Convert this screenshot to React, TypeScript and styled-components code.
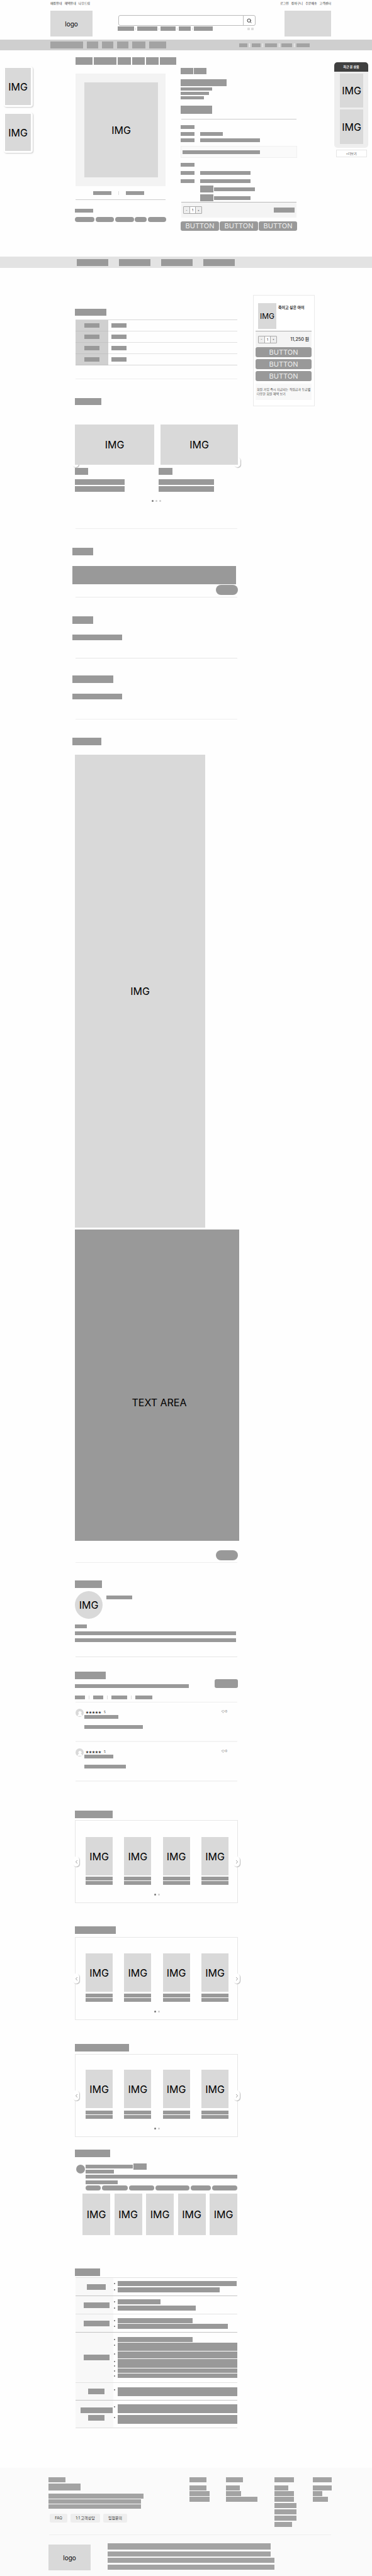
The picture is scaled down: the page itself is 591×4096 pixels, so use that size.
import React from "react";
import styled, { createGlobalStyle } from "styled-components";
import { ChevronLeft, ChevronRight, Heart, Search, UserRound } from "lucide-react";

const ink = "#999";
const soft = "#d9d9d9";

const GlobalStyle = createGlobalStyle`
  *, *::before, *::after { box-sizing: border-box; }
  body {
    margin: 0;
    background: #fefefe;
    color: #000;
    font-family: Inter, "Noto Sans CJK KR", sans-serif;
    font-size: 16px;
    line-height: 1;
  }
  a { color: inherit; text-decoration: none; }
  button, input { font: inherit; color: inherit; margin: 0; padding: 0; border: 0; border-radius: 0; }
  button { cursor: pointer; }
  ul { list-style: none; margin: 0; padding: 0; }
  p, h1, h2, h3 { margin: 0; }
`;

/* ---------- shared parts ---------- */

const Bar = styled.div<{ $w?: number; $h?: number; $mt?: number }>`
  width: ${(p) => (p.$w ? `${p.$w}px` : "100%")};
  max-width: 100%;
  height: ${(p) => p.$h ?? 6}px;
  margin-top: ${(p) => p.$mt ?? 0}px;
  flex: none;
  background: ${ink};
`;

const LinkBar = styled.a<{ $w: number; $h: number }>`
  display: block;
  flex: none;
  width: ${(p) => p.$w}px;
  height: ${(p) => p.$h}px;
  background: ${ink};
`;

const Picture = styled.div<{ $h: number; $size?: number }>`
  display: flex;
  align-items: center;
  justify-content: center;
  width: 100%;
  height: ${(p) => p.$h}px;
  background: ${soft};
  font-size: ${(p) => p.$size ?? 16}px;
`;

const Logo = styled.a`
  display: flex;
  flex: none;
  align-items: center;
  justify-content: center;
  width: 67px;
  height: 41px;
  background: ${soft};
  font-size: 10px;
`;

const Row = styled.div<{ $gap?: number; $mt?: number; $align?: string }>`
  display: flex;
  align-items: ${(p) => p.$align ?? "center"};
  gap: ${(p) => p.$gap ?? 0}px;
  margin-top: ${(p) => p.$mt ?? 0}px;
`;

const Rule = styled.hr<{ $mt?: number; $color?: string }>`
  height: 1px;
  margin: ${(p) => p.$mt ?? 0}px 1px 0;
  border: 0;
  background: ${(p) => p.$color ?? "#ccc"};
`;

const Separator = styled.span`
  flex: none;
  width: 1px;
  height: 6px;
  background: #ddd;
`;

const Pill = styled.button<{ $w: number }>`
  width: ${(p) => p.$w}px;
  height: 8px;
  border-radius: 4px;
  background: ${ink};
`;

const PillRow = styled.div<{ $mt: number }>`
  display: flex;
  justify-content: space-between;
  margin-top: ${(p) => p.$mt}px;
`;

const Action = styled.button<{ $h: number }>`
  flex: 1 1 0;
  height: ${(p) => p.$h}px;
  border-radius: 3px;
  background: ${ink};
  color: #eee;
  font-size: 11px;
  line-height: ${(p) => p.$h}px;
`;

const StepperBox = styled.div`
  display: grid;
  grid-template-columns: 9px 1fr 9px;
  width: 30px;
  height: 12px;
  border: 1px solid #aaa;
  border-radius: 1px;
  background: #eee;
  font-size: 5px;
  color: #222;
  button { background: #eee; }
  input {
    width: 100%;
    min-width: 0;
    background: #fff;
    border: solid #aaa;
    border-width: 0 1px;
    text-align: center;
  }
`;

const Dots = styled.div<{ $mt: number }>`
  display: flex;
  justify-content: center;
  gap: 3px;
  margin-top: ${(p) => p.$mt}px;
`;

const Dot = styled.button<{ $on?: boolean }>`
  width: 3px;
  height: 3px;
  border-radius: 50%;
  background: ${(p) => (p.$on ? "#777" : "#ccc")};
`;

const Stepper = () => (
  <StepperBox>
    <button aria-label="수량 빼기">-</button>
    <input aria-label="수량" defaultValue="1" />
    <button aria-label="수량 더하기">+</button>
  </StepperBox>
);

/* ---------- header ---------- */

const Header = styled.header`
  padding: 0 65px 5px 80px;
`;

const Utility = styled.div`
  display: flex;
  justify-content: space-between;
  height: 17px;
  padding-top: 3px;
  font-size: 5px;
  line-height: 5px;
  color: #333;
  nav { display: flex; gap: 4px; }
`;

const Masthead = styled.div`
  display: flex;
`;

const SearchArea = styled.div`
  flex: 1;
  margin: 7px 46px 0 41px;
`;

const SearchBox = styled.form`
  display: flex;
  height: 17px;
  border: 1px solid #bbb;
  border-radius: 3px;
  background: #fff;
  overflow: hidden;
  input { flex: 1; min-width: 0; font-size: 8px; background: none; outline: none; }
  button {
    display: flex;
    align-items: center;
    justify-content: center;
    width: 19px;
    background: none;
    border-left: 1px solid #bbb;
    color: #333;
  }
`;

const Keywords = styled.div`
  display: flex;
  align-items: center;
  gap: 2px;
  margin: 1px 0 0 -1px;
  ${Separator} { height: 4px; }
`;

const Pager = styled.div`
  display: flex;
  gap: 2px;
  margin: 0 3px 0 auto;
  button { width: 4px; height: 4px; border-radius: 1px; background: #ddd; }
`;

const Banner = styled.div`
  flex: none;
  width: 74px;
  height: 41px;
  background: ${soft};
`;

const Menu = styled.nav`
  display: flex;
  align-items: center;
  justify-content: space-between;
  height: 17px;
  padding: 0 99px 0 80px;
  background: #cfcfcf;
  ${LinkBar} { background: #a3a3a3; }
  ${Separator} { background: #f2f2f2; }
`;

const Band = styled.nav`
  display: flex;
  align-items: center;
  gap: 17px;
  height: 18px;
  padding-left: 122px;
  background: #e3e3e3;
`;

/* ---------- product ---------- */

const Stage = styled.div`
  display: flex;
  align-items: flex-start;
  padding-bottom: 41px;
`;

const LeftRail = styled.aside`
  display: flex;
  flex-direction: column;
  flex: none;
  gap: 9px;
  width: 119px;
  padding: 26px 0 0 6px;
`;

const RailCard = styled.div`
  width: 46px;
  padding: 2px 3px 3px 2px;
  border-radius: 4px;
  background: #fff;
  box-shadow: 1px 1px 2px #ccc;
`;

const Product = styled.main`
  flex: 1;
  min-width: 0;
  padding-top: 11px;
`;

const Crumbs = styled.nav`
  display: flex;
  gap: 2px;
  padding-left: 1px;
`;

const Split = styled.div`
  display: flex;
  gap: 23px;
  padding-top: 5px;
`;

const Gallery = styled.section`
  flex: none;
  width: 145px;
  padding-top: 9px;
`;

const Frame = styled.div`
  margin: 0 1px;
  padding: 14px 12px 14px 14px;
  background: #f3f3f3;
`;

const Tabs = styled.div`
  display: flex;
  align-items: center;
  justify-content: center;
  gap: 11px;
  padding: 8px 7px 0 0;
`;

const Info = styled.section`
  flex: 1;
  min-width: 0;
`;

const Spec = styled.div<{ $mt: number }>`
  display: grid;
  grid-template-columns: 22px 1fr;
  column-gap: 9px;
  margin-top: ${(p) => p.$mt}px;
`;

const Options = styled.div`
  display: grid;
  gap: 3px;
  margin: 4px 0 1px 31px;
`;

const Notice = styled.div`
  margin-top: 6px;
  padding: 6px 2px 5px;
  border: 1px solid #f0f0f0;
  background: #fafafa;
`;

const Order = styled.div`
  display: flex;
  align-items: center;
  justify-content: space-between;
  height: 24px;
  margin: 0 1px 6px;
  padding: 0 3px;
  background: #f4f4f4;
`;

const RightRail = styled.aside`
  flex: none;
  width: 54px;
  margin: 19px 6px 0 59px;
`;

const Recent = styled.div`
  border-radius: 5px;
  background: #eee;
  overflow: hidden;
  h2 {
    height: 15px;
    background: #404040;
    color: #fff;
    font-size: 5px;
    font-weight: 700;
    line-height: 15px;
    text-align: center;
  }
`;

const RecentList = styled.div`
  display: grid;
  gap: 3px;
  padding: 3px 8px 6px 9px;
`;

const More = styled.button`
  display: block;
  width: 49px;
  height: 12px;
  margin: 3px auto 0;
  border: 1px solid #e6e6e6;
  background: #fff;
  color: #333;
  font-size: 5px;
  line-height: 10px;
`;

/* ---------- body ---------- */

const Body = styled.div`
  display: flex;
  align-items: flex-start;
  gap: 24px;
  padding: 0 91px 63px 119px;
`;

const Main = styled.div`
  flex: 1;
  min-width: 0;
`;

const Section = styled.section<{ $top: number; $bottom?: number; $line?: string }>`
  position: relative;
  padding: ${(p) => p.$top}px 0 ${(p) => p.$bottom ?? 0}px;
  &::after {
    content: "";
    display: ${(p) => (p.$line ? "block" : "none")};
    position: absolute;
    right: 1px;
    bottom: 0;
    left: 1px;
    height: 1px;
    background: ${(p) => p.$line};
  }
`;

const Outdent = styled.div`
  margin: 0 3px 0 -4px;
`;

const InfoTable = styled.table`
  width: calc(100% - 2px);
  margin: 6px 1px 0;
  border-spacing: 0;
  border-top: 1px solid #d8d8d8;
  th, td { height: 18px; padding: 0; border-bottom: 1px solid #e0e0e0; }
  th { width: 52px; background: #d0d0d0; border-color: #c4c4c4; }
  th ${Bar} { margin: 0 auto; }
  td { padding-left: 5px; }
  tr:last-child td { border-color: #d8d8d8; }
`;

const Slider = styled.div`
  position: relative;
  margin-top: 31px;
`;

const Slides = styled.div`
  position: relative;
  z-index: 1;
  display: grid;
  grid-template-columns: 126fr 123fr;
  gap: 10px;
`;

const Captions = styled.div`
  display: grid;
  grid-template-columns: 133px 1fr;
  margin-top: 5px;
`;

const Arrow = styled.button<{ $side: "left" | "right"; $top?: string }>`
  position: absolute;
  top: ${(p) => p.$top ?? "50%"};
  ${(p) => p.$side}: -4px;
  display: flex;
  align-items: center;
  justify-content: center;
  width: 10px;
  height: 16px;
  transform: translateY(-50%);
  border-radius: 5px;
  background: #fff;
  box-shadow: 1px 1px 1px #bbb;
  color: #777;
  svg { flex: none; }
`;

const RoundButton = styled.button<{ $mt: number }>`
  display: block;
  width: 35px;
  height: 16px;
  margin: ${(p) => p.$mt}px 0 0 auto;
  border-radius: 8px;
  background: ${ink};
`;

const Detail = styled.div`
  width: 80%;
  margin-top: 15px;
`;

const TextBlock = styled.div`
  display: flex;
  align-items: center;
  justify-content: center;
  height: 495px;
  margin: 3px -2px 0 0;
  padding: 54px 0 0 7px;
  background: ${ink};
`;

const Portrait = styled.div`
  display: flex;
  flex: none;
  align-items: center;
  justify-content: center;
  width: 44px;
  height: 44px;
  border-radius: 50%;
  background: ${soft};
`;

const WriteButton = styled.button`
  width: 37px;
  height: 14px;
  margin-left: auto;
  border-radius: 3px;
  background: ${ink};
`;

const Review = styled.article`
  display: grid;
  grid-template-columns: 13px 1fr auto;
  column-gap: 1px;
  margin: 0 1px;
  padding: 10px 0 19px;
  border-bottom: 2px solid #f3f3f3;
`;

const Avatar = styled.div`
  display: flex;
  align-items: flex-end;
  justify-content: center;
  width: 13px;
  height: 13px;
  border-radius: 50%;
  background: ${soft};
  color: #fff;
`;

const Rating = styled.p`
  display: flex;
  gap: 4px;
  height: 10px;
  padding-left: 2px;
  color: #333;
  font-family: "Noto Sans CJK KR", sans-serif;
  font-size: 5px;
  line-height: 10px;
`;

const Likes = styled.button`
  display: flex;
  align-items: center;
  gap: 1px;
  height: 8px;
  margin-right: 16px;
  background: none;
  color: #555;
  font-size: 5px;
`;

const Carousel = styled.div<{ $mt: number; $top: number }>`
  position: relative;
  margin-top: ${(p) => p.$mt}px;
  padding: ${(p) => p.$top}px 14px 11px 16px;
  border: 1px solid #e6e6e6;
`;

const Books = styled.div`
  display: flex;
  justify-content: space-between;
`;

const Book = styled.figure`
  width: 43px;
  margin: 0;
`;

const Profile = styled.div`
  display: flex;
  gap: 1px;
  margin: 10px 1px 0 2px;
`;

const ProfileText = styled.div`
  flex: 1;
  min-width: 0;
`;

const Disc = styled.div`
  flex: none;
  width: 14px;
  height: 14px;
  margin-top: 2px;
  border-radius: 50%;
  background: ${ink};
`;

const Feed = styled.div`
  display: flex;
  justify-content: space-between;
  margin: 5px 1px 0 12px;
`;

const Shot = styled.div`
  width: 44px;
`;

const Policy = styled.table`
  width: calc(100% - 2px);
  margin: 2px 1px 0;
  border-spacing: 0;
  border-top: 1px solid #e2e2e2;
  th, td { padding: 0; border-bottom: 1px solid #c4c4c4; }
  tr:nth-child(even) > * { border-color: #e2e2e2; }
  tr:last-child > * { border-color: #ddd; }
  th { width: 60px; padding-left: 6px; background: #f8f8f8; }
  th ${Bar} { margin: 0 auto; }
  th ${Bar} + ${Bar} { margin-top: 3px; }
`;

const PolicyRow = styled.tr<{ $h: number }>`
  height: ${(p) => p.$h}px;
`;

const Terms = styled.ul<{ $gap: number }>`
  display: grid;
  gap: ${(p) => p.$gap}px;
  li { display: flex; gap: 4px; padding-left: 1px; }
`;

const Bullets = styled.span`
  flex: none;
  width: 2px;
  i { display: block; height: 2px; margin: 3px 0 5px; background: #666; border-radius: 1px; }
  i:last-child { margin-bottom: 0; }
`;

/* ---------- order card ---------- */

const Card = styled.aside`
  flex: none;
  width: 98px;
  margin-top: 43px;
  padding: 12px 4px 9px 3px;
  border: 1px solid #eaeaea;
  background: #fff;
`;

const CardHead = styled.div`
  display: flex;
  gap: 3px;
  padding: 0 0 3px 4px;
  h2 { padding-top: 3px; font-size: 6px; font-weight: 700; line-height: 7px; white-space: nowrap; color: #222; }
`;

const Thumb = styled.div`
  flex: none;
  width: 29px;
`;

const CardOrder = styled.div`
  display: flex;
  align-items: center;
  justify-content: space-between;
  height: 26px;
  padding: 0 4px;
  border-top: 1px solid #aaa;
  background: #f4f4f4;
  strong { font-size: 7px; color: #444; font-weight: 600; }
`;

const CardActions = styled.div`
  display: grid;
  gap: 3px;
`;

const CardNote = styled.p`
  margin-top: 4px;
  padding: 6px 2px;
  background: #f8f8f8;
  color: #444;
  font-size: 5px;
  line-height: 7px;
  white-space: nowrap;
`;

/* ---------- footer ---------- */

const Footer = styled.footer`
  padding: 15px 64px 9px 77px;
  background: #fafafa;
  ${Bar}, ${LinkBar} { background: #a3a3a3; }
`;

const FooterTop = styled.div`
  display: flex;
  align-items: flex-start;
  padding-bottom: 12px;
`;

const Contact = styled.div`
  flex: 1;
  min-width: 0;
`;

const FooterColumn = styled.nav<{ $w: number }>`
  flex: none;
  display: grid;
  gap: 1px;
  width: ${(p) => p.$w}px;
  a:first-child { margin-bottom: 4px; }
  a:nth-child(n + 5) { margin-top: 1px; }
`;

const HelpLinks = styled.div`
  display: flex;
  gap: 5px;
  margin: 8px 0 0 2px;
`;

const Help = styled.button<{ $w: number }>`
  width: ${(p) => p.$w}px;
  height: 14px;
  border-radius: 2px;
  background: #eee;
  color: #333;
  font-size: 6px;
  line-height: 14px;
`;

const Company = styled.div`
  display: flex;
  gap: 27px;
  padding-top: 13px;
  ${Logo} { margin-top: 2px; }
`;

/* ---------- data ---------- */

const carousels = [
  { before: 46, title: 60, mt: 3, top: 26, gap: 2 },
  { before: 37, title: 65, mt: 5, top: 25, gap: 3 },
  { before: 38, title: 86, mt: 4, top: 24, gap: 4 },
];

const policies = [
  { h: 29, labels: [30], gap: 2, lines: [[189, 8], [162, 8]] },
  { h: 29, labels: [41], gap: 2, lines: [[68, 8], [124, 8]] },
  { h: 29, labels: [41], gap: 1, lines: [[119, 8], [175, 8]] },
  { h: 80, labels: [41], gap: 1, lines: [[119, 8], [190, 13], [190, 11], [190, 14, 2], [190, 7], [190, 7]] },
  { h: 28, labels: [26], gap: 1, lines: [[190, 14]] },
  { h: 44, labels: [51, 26], gap: 3, lines: [[190, 14], [190, 14]] },
];

const footerColumns = [
  { w: 58, links: [27, 27, 32, 32] },
  { w: 77, links: [27, 22, 24, 50] },
  { w: 61, links: [31, 22, 31, 31, 35, 35, 35, 28] },
  { w: 30, links: [30, 30, 15, 24] },
];

const withSeparators = (widths: number[], h: number) =>
  widths.map((w, i) => (
    <React.Fragment key={i}>
      {i > 0 && <Separator />}
      <LinkBar href="#" $w={w} $h={h} />
    </React.Fragment>
  ));

export default function App() {
  return (
    <>
      <GlobalStyle />
      <Header>
        <Utility>
          <nav>
            <a href="#">매장안내</a>
            <a href="#">혜택안내</a>
            <a href="#">나우드림</a>
          </nav>
          <nav>
            <a href="#">로그인</a>
            <a href="#">장바구니</a>
            <a href="#">주문배송</a>
            <a href="#">고객센터</a>
          </nav>
        </Utility>
        <Masthead>
          <Logo href="#">logo</Logo>
          <SearchArea>
            <SearchBox>
              <input type="text" aria-label="검색어" />
              <button type="button" aria-label="검색">
                <Search size={8} strokeWidth={3} />
              </button>
            </SearchBox>
            <Keywords>
              {withSeparators([26, 32, 24, 19, 30], 7)}
              <Pager>
                <button aria-label="이전" />
                <button aria-label="다음" />
              </Pager>
            </Keywords>
          </SearchArea>
          <Banner />
        </Masthead>
      </Header>

      <Menu>
        <Row $gap={6}>
          {[52, 18, 18, 18, 21, 27].map((w, i) => (
            <LinkBar key={i} href="#" $w={w} $h={11} />
          ))}
        </Row>
        <Row $gap={3}>{withSeparators([13, 14, 19, 17, 21], 6)}</Row>
      </Menu>

      <Stage>
        <LeftRail>
          <RailCard><Picture $h={59}>IMG</Picture></RailCard>
          <RailCard><Picture $h={59}>IMG</Picture></RailCard>
        </LeftRail>

        <Product>
          <Crumbs>
            {[27, 36, 21, 20, 20, 26].map((w, i) => (
              <LinkBar key={i} href="#" $w={w} $h={12} />
            ))}
          </Crumbs>
          <Split>
            <Gallery>
              <Frame><Picture $h={151}>IMG</Picture></Frame>
              <Tabs>
                <LinkBar href="#" $w={29} $h={6} />
                <Separator />
                <LinkBar href="#" $w={29} $h={6} />
              </Tabs>
              <Rule $mt={7} />
              <Bar $w={29} $mt={14} />
              <PillRow $mt={7}>
                {[31, 29, 30, 19, 29].map((w, i) => (
                  <Pill key={i} $w={w} aria-label={`태그 ${i + 1}`} />
                ))}
              </PillRow>
            </Gallery>

            <Info>
              <Row $gap={1}>
                <Bar $w={20} $h={10} />
                <Bar $w={20} $h={10} />
              </Row>
              <Bar $w={73} $h={11} $mt={8} />
              <Bar $w={50} $h={5} $mt={2} />
              <Bar $w={45} $h={5} $mt={2} />
              <Bar $w={37} $h={5} $mt={2} />
              <Bar $w={50} $h={13} $mt={10} />
              <Rule $mt={8} />
              <Bar $w={22} $mt={9} />
              <Spec $mt={5}><Bar /><Bar $w={36} /></Spec>
              <Spec $mt={4}><Bar /><Bar $w={95} /></Spec>
              <Notice><Bar $w={123} /></Notice>
              <Bar $w={22} $mt={8} />
              <Spec $mt={7}><Bar /><Bar $w={80} /></Spec>
              <Spec $mt={7}><Bar /><Bar $w={80} /></Spec>
              <Options>
                <Row $gap={1}><Bar $w={21} $h={11} /><Bar $w={65} /></Row>
                <Row $gap={1}><Bar $w={21} $h={11} /><Bar $w={58} /></Row>
              </Options>
              <Rule $color="#bbb" />
              <Order>
                <Stepper />
                <Bar $w={33} $h={8} />
              </Order>
              <Row $gap={1}>
                <Action $h={15}>BUTTON</Action>
                <Action $h={15}>BUTTON</Action>
                <Action $h={15}>BUTTON</Action>
              </Row>
            </Info>
          </Split>
        </Product>

        <RightRail>
          <Recent>
            <h2>최근 본 상품</h2>
            <RecentList>
              <Picture $h={54}>IMG</Picture>
              <Picture $h={55}>IMG</Picture>
            </RecentList>
          </Recent>
          <More>+더보기</More>
        </RightRail>
      </Stage>

      <Band>
        {[50, 50, 50, 50].map((w, i) => (
          <LinkBar key={i} href="#" $w={w} $h={11} />
        ))}
      </Band>

      <Body>
        <Main>
          <Section $top={65} $bottom={22} $line="#eee">
            <Bar $w={50} $h={11} />
            <InfoTable>
              <tbody>
                {[0, 1, 2, 3].map((i) => (
                  <tr key={i}>
                    <th scope="row"><Bar $w={24} $h={7} /></th>
                    <td><Bar $w={24} $h={7} /></td>
                  </tr>
                ))}
              </tbody>
            </InfoTable>
          </Section>

          <Section $top={30} $bottom={43} $line="#eee">
            <Bar $w={42} $h={11} />
            <Slider>
              <Slides>
                <Picture $h={64}>IMG</Picture>
                <Picture $h={64}>IMG</Picture>
              </Slides>
              <Arrow $side="left" $top="60px" aria-label="이전" />
              <Arrow $side="right" $top="60px" aria-label="다음" />
            </Slider>
            <Captions>
              {[[21, 79], [22, 88]].map(([a, b], i) => (
                <div key={i}>
                  <Bar $w={a} $h={11} />
                  <Bar $w={b} $h={9} $mt={7} />
                  <Bar $w={b} $h={9} $mt={2} />
                </div>
              ))}
            </Captions>
            <Dots $mt={13}>
              <Dot $on aria-label="1" /><Dot aria-label="2" /><Dot aria-label="3" />
            </Dots>
          </Section>

          <Section $top={30} $bottom={4} $line="#eaeaea">
            <Outdent>
              <Bar $w={33} $h={12} />
              <Bar $h={29} $mt={17} />
            </Outdent>
            <RoundButton $mt={1} aria-label="더보기" />
          </Section>

          <Section $top={30} $bottom={29} $line="#e6e6e6">
            <Outdent>
              <Bar $w={33} $h={12} />
              <Bar $w={79} $h={9} $mt={17} />
            </Outdent>
          </Section>

          <Section $top={27} $bottom={32} $line="#eee">
            <Outdent>
              <Bar $w={65} $h={12} />
              <Bar $w={79} $h={9} $mt={17} />
            </Outdent>
          </Section>

          <Section $top={29} $bottom={4} $line="#eee">
            <Outdent>
              <Bar $w={46} $h={12} />
            </Outdent>
            <Detail><Picture $h={752}>IMG</Picture></Detail>
            <TextBlock>TEXT AREA</TextBlock>
            <RoundButton $mt={15} aria-label="더보기" />
          </Section>

          <Section $top={28} $bottom={24} $line="#e6e6e6">
            <Bar $w={43} $h={12} />
            <Row $gap={6} $mt={5} $align="flex-start">
              <Portrait>IMG</Portrait>
              <Bar $w={41} $mt={7} />
            </Row>
            <Bar $w={19} $mt={9} />
            <Bar $w={256} $mt={5} />
            <Bar $w={256} $mt={5} />
          </Section>

          <Section $top={23} $bottom={5} $line="#eee">
            <Bar $w={49} $h={12} />
            <Row $align="flex-end">
              <Bar $w={181} />
              <WriteButton aria-label="리뷰 쓰기" />
            </Row>
            <Row $gap={6} $mt={12}>{withSeparators([16, 16, 25, 27], 6)}</Row>
          </Section>
          {[[54, 93], [46, 66]].map(([a, b], i) => (
            <Review key={i}>
              <Avatar><UserRound size={10} fill="currentColor" /></Avatar>
              <div>
                <Rating><span>★★★★★</span><span>5</span></Rating>
                <Bar $w={a} />
                <Bar $w={b} $mt={10} />
              </div>
              <Likes><Heart size={5} />0</Likes>
            </Review>
          ))}

          {carousels.map((c, i) => (
            <Section key={i} $top={c.before}>
              <Bar $w={c.title} $h={12} />
              <Carousel $mt={c.mt} $top={c.top}>
                <Books>
                  {[0, 1, 2, 3].map((n) => (
                    <Book key={n}>
                      <Picture $h={61}>IMG</Picture>
                      <Bar $mt={c.gap} />
                      <Bar $mt={1} />
                    </Book>
                  ))}
                </Books>
                <Dots $mt={14}>
                  <Dot $on aria-label="1" /><Dot aria-label="2" />
                </Dots>
                <Arrow $side="left" aria-label="이전"><ChevronLeft size={9} /></Arrow>
                <Arrow $side="right" aria-label="다음"><ChevronRight size={9} /></Arrow>
              </Carousel>
            </Section>
          ))}

          <Section $top={20}>
            <Bar $w={56} $h={12} />
            <Profile>
              <Disc />
              <ProfileText>
                <Row $gap={1}><Bar $w={75} /><Bar $w={21} $h={10} /></Row>
                <Bar $w={45} />
                <Bar $mt={2} />
                <Bar $w={51} $mt={3} />
                <PillRow $mt={2}>
                  {[24, 41, 40, 54, 32, 40].map((w, i) => (
                    <Pill key={i} $w={w} aria-label={`태그 ${i + 1}`} />
                  ))}
                </PillRow>
              </ProfileText>
            </Profile>
            <Feed>
              {[0, 1, 2, 3, 4].map((n) => (
                <Shot key={n}><Picture $h={66}>IMG</Picture></Shot>
              ))}
            </Feed>
          </Section>

          <Section $top={53}>
            <Bar $w={40} $h={12} />
            <Policy>
              <tbody>
                {policies.map((p, i) => (
                  <PolicyRow key={i} $h={p.h}>
                    <th scope="row">
                      {p.labels.map((w) => <Bar key={w} $w={w} $h={9} />)}
                    </th>
                    <td>
                      <Terms $gap={p.gap}>
                        {p.lines.map(([w, h, dots], n) => (
                          <li key={n}>
                            <Bullets><i />{dots === 2 && <i />}</Bullets>
                            <Bar $w={w} $h={h} />
                          </li>
                        ))}
                      </Terms>
                    </td>
                  </PolicyRow>
                ))}
              </tbody>
            </Policy>
          </Section>
        </Main>

        <Card>
          <CardHead>
            <Thumb><Picture $h={41} $size={12}>IMG</Picture></Thumb>
            <h2>죽이고 싶은 아이</h2>
          </CardHead>
          <CardOrder>
            <Stepper />
            <strong>11,250 원</strong>
          </CardOrder>
          <CardActions>
            <Action $h={16}>BUTTON</Action>
            <Action $h={16}>BUTTON</Action>
            <Action $h={16}>BUTTON</Action>
          </CardActions>
          <CardNote>
            회원 가입 즉시 지급되는 적립금과 등급별
            <br />
            다양한 회원 혜택 보기
          </CardNote>
        </Card>
      </Body>

      <Footer>
        <FooterTop>
          <Contact>
            <Bar $w={27} $h={8} />
            <Bar $w={51} $h={11} $mt={2} />
            <Bar $w={151} $h={8} $mt={5} />
            <Bar $w={147} $h={7} $mt={1} />
            <Bar $w={147} $h={7} $mt={1} />
            <HelpLinks>
              <Help $w={28}>FAQ</Help>
              <Help $w={47}>1:1 고객상담</Help>
              <Help $w={38}>입점문의</Help>
            </HelpLinks>
          </Contact>
          {footerColumns.map((c, i) => (
            <FooterColumn key={i} $w={c.w}>
              {c.links.map((w, n) => <LinkBar key={n} href="#" $w={w} $h={8} />)}
            </FooterColumn>
          ))}
        </FooterTop>
        <Rule $color="#eee" />
        <Company>
          <Logo href="#">logo</Logo>
          <div>
            <Bar $w={259} $h={10} />
            <Bar $w={259} $h={8} $mt={3} />
            <Bar $w={265} $h={8} $mt={2} />
            <Bar $w={265} $h={8} $mt={3} />
          </div>
        </Company>
      </Footer>
    </>
  );
}
